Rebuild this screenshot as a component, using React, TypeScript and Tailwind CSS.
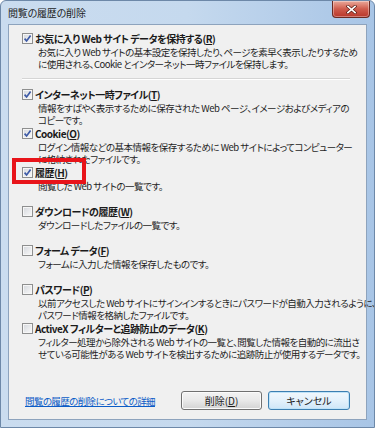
import React from 'react';

type Item = {
  label: string;
  mnemonic: string;
  checked: boolean;
  desc: string[];
};

const items: Item[] = [
  {
    label: 'お気に入り Web サイト データを保持する',
    mnemonic: 'R',
    checked: true,
    desc: [
      'お気に入り Web サイトの基本設定を保持したり、ページを素早く表示したりするため',
      'に使用される、Cookie とインターネット一時ファイルを保持します。',
    ],
  },
  {
    label: 'インターネット一時ファイル',
    mnemonic: 'T',
    checked: true,
    desc: ['情報をすばやく表示するために保存された Web ページ、イメージおよびメディアの', 'コピーです。'],
  },
  {
    label: 'Cookie',
    mnemonic: 'O',
    checked: true,
    desc: ['ログイン情報などの基本情報を保存するために Web サイトによってコンピューター', 'に格納されたファイルです。'],
  },
  {
    label: '履歴',
    mnemonic: 'H',
    checked: true,
    desc: ['閲覧した Web サイトの一覧です。'],
  },
  {
    label: 'ダウンロードの履歴',
    mnemonic: 'W',
    checked: false,
    desc: ['ダウンロードしたファイルの一覧です。'],
  },
  {
    label: 'フォーム データ',
    mnemonic: 'F',
    checked: false,
    desc: ['フォームに入力した情報を保存したものです。'],
  },
  {
    label: 'パスワード',
    mnemonic: 'P',
    checked: false,
    desc: [
      '以前アクセスした Web サイトにサインインするときにパスワードが自動入力されるように、',
      'パスワード情報を格納したファイルです。',
    ],
  },
  {
    label: 'ActiveX フィルターと追跡防止のデータ',
    mnemonic: 'K',
    checked: false,
    desc: [
      'フィルター処理から除外される Web サイトの一覧と、閲覧した情報を自動的に流出さ',
      'せている可能性がある Web サイトを検出するために追跡防止が使用するデータです。',
    ],
  },
];

const CheckBox = ({ checked }: { checked: boolean }) => (
  <span className="flex h-[11px] w-[11px] shrink-0 items-center justify-center border border-[#8e8f8f] bg-linear-to-br from-[#d4d7dc] to-[#fafafa] shadow-[inset_0_0_0_1px_#f6f6f6]">
    {checked && (
      <svg viewBox="0 0 9 9" className="h-[9px] w-[9px]">
        <path d="M1.6 4.6 L3.6 7 L7.6 1.6" fill="none" stroke="#3d5aa6" strokeWidth="1.7" />
      </svg>
    )}
  </span>
);

const Option = ({ item }: { item: Item }) => (
  <div className="h-[39px]">
    <div className="flex h-[15px] items-center gap-[2px]">
      <CheckBox checked={item.checked} />
      <span className="whitespace-nowrap text-[10px] font-bold leading-[15px] tracking-[-0.5px] text-[#1a1a1a]">
        {item.label}(<span className="underline">{item.mnemonic}</span>)
      </span>
    </div>
    <div className="pl-[16px] text-[9.5px] leading-[12px] tracking-[-0.5px] text-[#1e1e1e]">
      {item.desc.map((line, i) => (
        <div key={i} className="whitespace-nowrap">
          {line}
        </div>
      ))}
    </div>
  </div>
);

const App = () => {
  return (
    <div className="relative flex h-[428px] w-[375px] flex-col overflow-hidden rounded-t-[6px] border border-[#6d88a8] bg-linear-to-r from-[#cadcef] via-[#c5d9ee] to-[#a8c5e6] font-['Noto_Sans_CJK_JP',sans-serif] [font-feature-settings:'palt']">
      {/* Title bar */}
      <div className="flex h-[23px] shrink-0 items-start justify-between pl-[7px] pr-[4px]">
        <span className="mt-[5px] text-[10px] leading-[14px] tracking-[-0.2px] text-[#1b1b1b]">閲覧の履歴の削除</span>
        <div className="flex h-[17px] w-[38px] items-center justify-center rounded-b-[4px] border border-t-0 border-[#6b2a22] bg-linear-to-b from-[#e9a99b] via-[#cf5b4c] to-[#b8362a] shadow-[inset_0_0_0_1px_rgba(255,255,255,0.35)]">
          <svg viewBox="0 0 12 10" className="h-[9px] w-[11px]">
            <path d="M2 1.5 L10 8.5 M10 1.5 L2 8.5" stroke="#5b1c14" strokeWidth="3.4" strokeLinecap="square" />
            <path d="M2 1.5 L10 8.5 M10 1.5 L2 8.5" stroke="#ffffff" strokeWidth="1.8" strokeLinecap="square" />
          </svg>
        </div>
      </div>

      {/* Client area */}
      <div className="mx-[7px] mb-[7px] flex flex-1 flex-col border border-[#8da3bd] bg-[#f0f0f0] pl-[13px] pr-[16px] pt-[6px] pb-[9px]">
        <Option item={items[0]} />
        <div className="mt-[8px] mb-[7px] border-t border-b border-t-[#d5d5d5] border-b-white" />
        {items.slice(1).map((item) => (
          <Option key={item.mnemonic} item={item} />
        ))}

        <div className="flex-1" />

        {/* Footer */}
        <div className="flex items-center justify-between">
          <a className="ml-[3px] cursor-pointer text-[9.5px] leading-[12px] tracking-[-0.6px] text-[#0b5cc7] underline">
            閲覧の履歴の削除についての詳細
          </a>
          <div className="flex gap-[6px]">
            <button className="h-[19px] w-[81px] rounded-[3px] border border-[#707070] bg-linear-to-b from-[#f3f3f3] via-[#e9e9e9] to-[#d3d3d3] text-[10px] leading-[17px] text-[#1a1a1a] shadow-[inset_0_0_0_1px_#fbfbfb]">
              削除(<span className="underline">D</span>)
            </button>
            <button className="h-[19px] w-[82px] rounded-[3px] border border-[#3c7fb1] bg-linear-to-b from-[#f1f8fd] via-[#e3f1fb] to-[#cfe6f7] text-[10px] leading-[17px] text-[#1a1a1a] shadow-[inset_0_0_0_1px_#bfe3f8]">
              キャンセル
            </button>
          </div>
        </div>
      </div>

      {/* Red highlight around 履歴 */}
      <div className="pointer-events-none absolute left-[11px] top-[157px] h-[26px] w-[74px] border-[4px] border-[#e8141a]" />
    </div>
  );
};

export default App;
